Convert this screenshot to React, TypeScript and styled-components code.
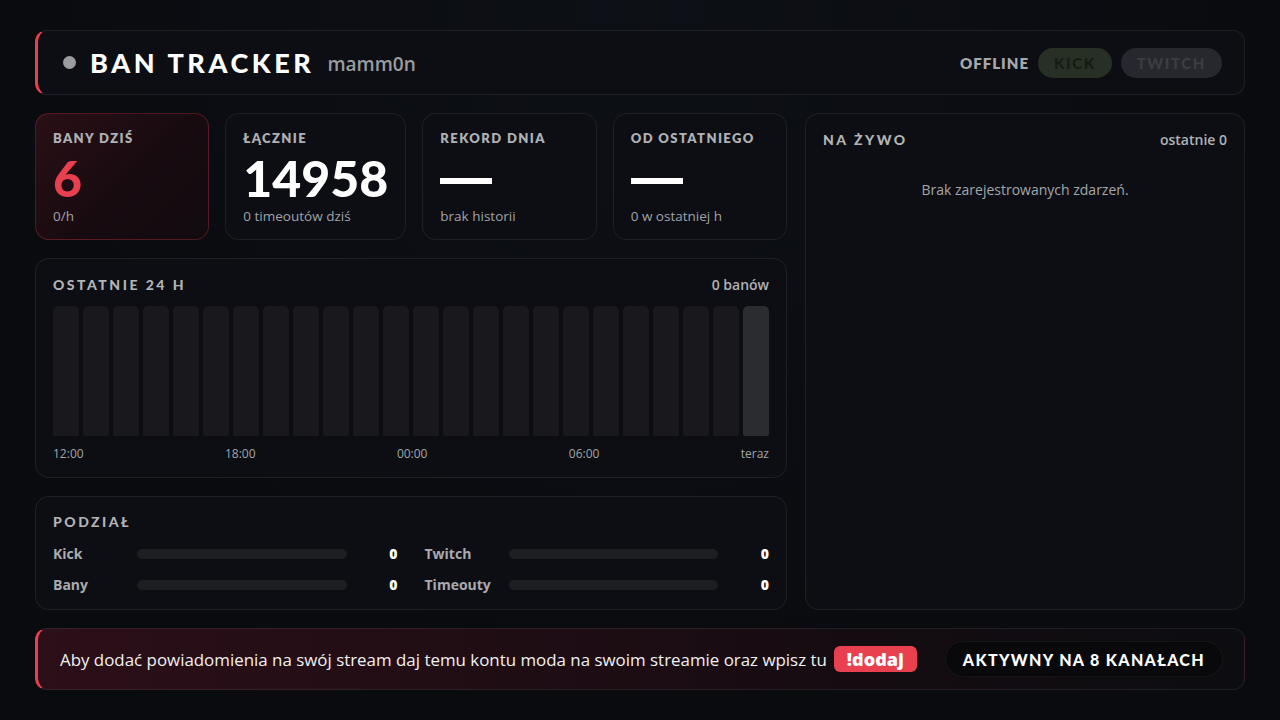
import React from "react";
import styled, { createGlobalStyle, css } from "styled-components";

const RED = "#e8404f";

const GlobalStyle = createGlobalStyle`
  html, body {
    margin: 0;
    padding: 0;
    background: #090b0f;
    color: #e6e6e6;
    font-family: "Open Sans", "Noto Sans", sans-serif;
  }
  * { box-sizing: border-box; }
`;

const Page = styled.div`
  width: 1280px;
  height: 720px;
  padding: 30px 35px 30px 35px;
  display: flex;
  flex-direction: column;
  gap: 18px;
  background: radial-gradient(ellipse at 50% 0%, #0d1016 0%, #090b0f 70%);
`;

const Panel = styled.section`
  background: #0c0e13;
  border: 1px solid rgba(255, 255, 255, 0.07);
  border-radius: 14px;
`;

const Header = styled(Panel)`
  height: 65px;
  flex-shrink: 0;
  border-left: 3px solid ${RED};
  border-radius: 12px;
  display: flex;
  align-items: center;
  justify-content: space-between;
  padding: 0 22px 0 25px;
`;

const Brand = styled.div`
  display: flex;
  align-items: center;
`;

const StatusDot = styled.span`
  width: 13px;
  height: 13px;
  border-radius: 50%;
  background: #9b9c9f;
  margin-right: 14px;
`;

const Title = styled.h1`
  margin: 0;
  font-family: "Lato", sans-serif;
  font-weight: 900;
  font-size: 27px;
  letter-spacing: 3.6px;
  color: #fff;
`;

const Channel = styled.span`
  margin-left: 13px;
  font-size: 19px;
  font-weight: 600;
  color: #9a9ca1;
  margin-top: 2px;
`;

const HeaderRight = styled.div`
  display: flex;
  align-items: center;
  gap: 9px;
`;

const Offline = styled.span`
  font-family: "Lato", sans-serif;
  font-weight: 800;
  font-size: 15px;
  letter-spacing: 1px;
  color: #a6a8ac;
`;

const Pill = styled.span<{ $tone: "kick" | "twitch" }>`
  height: 30px;
  padding: 0 16px;
  border-radius: 15px;
  display: inline-flex;
  align-items: center;
  font-family: "Lato", sans-serif;
  font-weight: 900;
  font-size: 15px;
  letter-spacing: 1.6px;
  ${({ $tone }) =>
    $tone === "kick"
      ? css`
          background: #283026;
          color: #141c13;
        `
      : css`
          background: #27272e;
          color: #3c3c45;
        `}
`;

const Main = styled.div`
  flex: 1;
  display: grid;
  grid-template-columns: 752px 1fr;
  gap: 18px;
  min-height: 0;
`;

const LeftCol = styled.div`
  display: flex;
  flex-direction: column;
  gap: 18px;
`;

const StatRow = styled.div`
  display: flex;
  gap: 16px;
  height: 127px;
`;

const StatCard = styled(Panel)<{ $accent?: boolean }>`
  flex: 1 1 0;
  padding: 16px 17px 0;
  display: flex;
  flex-direction: column;
  ${({ $accent }) =>
    $accent &&
    css`
      background: linear-gradient(135deg, #2a0f16 0%, #170b10 55%, #110b0f 100%);
      border-color: rgba(232, 64, 79, 0.28);
    `}
`;

const Label = styled.div`
  font-family: "Lato", sans-serif;
  font-weight: 800;
  font-size: 13px;
  letter-spacing: 1.4px;
  color: #aeb0b4;
  text-transform: uppercase;
`;

const StatValue = styled.div<{ $red?: boolean }>`
  font-family: "Lato", sans-serif;
  font-weight: 900;
  font-size: 50px;
  line-height: 50px;
  height: 50px;
  margin-top: 7px;
  color: ${({ $red }) => ($red ? RED : "#fff")};
  display: flex;
  align-items: center;
`;

const Dash = styled.span`
  display: block;
  width: 52px;
  height: 6px;
  background: #fff;
  margin-top: 6px;
`;

const StatSub = styled.div`
  margin-top: 4px;
  font-size: 13.5px;
  color: #a0a2a7;
`;

const ChartPanel = styled(Panel)`
  height: 220px;
  padding: 16px 17px 0;
`;

const PanelHead = styled.div`
  display: flex;
  justify-content: space-between;
  align-items: center;
`;

const HeadTitle = styled.h2`
  margin: 0;
  font-family: "Lato", sans-serif;
  font-weight: 900;
  font-size: 14px;
  letter-spacing: 2.5px;
  color: #b2b4b8;
`;

const HeadMeta = styled.span`
  font-size: 14px;
  font-weight: 600;
  color: #b0b2b6;
`;

const Bars = styled.div`
  margin-top: 12px;
  height: 130px;
  display: grid;
  grid-template-columns: repeat(24, 1fr);
  gap: 4px;
  align-items: end;
`;

const Bar = styled.div<{ $now?: boolean }>`
  height: 100%;
  border-radius: 5px 5px 2px 2px;
  background: ${({ $now }) => ($now ? "#2a2c30" : "#19191d")};
`;

const Axis = styled.div`
  margin-top: 9px;
  display: flex;
  justify-content: space-between;
  font-size: 12px;
  color: #a3a5a9;
`;

const SplitPanel = styled(Panel)`
  flex: 1;
  padding: 16px 17px 0;
`;

const SplitGrid = styled.div`
  margin-top: 14px;
  display: grid;
  grid-template-columns: 1fr 1fr;
  column-gap: 27px;
  row-gap: 12px;
`;

const SplitRow = styled.div`
  display: grid;
  grid-template-columns: 84px 1fr 51px;
  align-items: center;
  height: 19px;
`;

const SplitName = styled.span`
  font-size: 14px;
  font-weight: 700;
  color: #a9abaf;
`;

const Track = styled.div`
  height: 10px;
  border-radius: 5px;
  background: #1c1e22;
`;

const SplitValue = styled.span`
  text-align: right;
  font-size: 14px;
  font-weight: 800;
  color: #fff;
`;

const LivePanel = styled(Panel)`
  padding: 16px 17px;
`;

const Empty = styled.p`
  margin: 31px 0 0;
  text-align: center;
  font-size: 14px;
  color: #a4a6aa;
`;

const Footer = styled.footer`
  height: 62px;
  flex-shrink: 0;
  border: 1px solid rgba(255, 255, 255, 0.07);
  border-left: 3px solid ${RED};
  border-radius: 12px;
  background: linear-gradient(90deg, #2c0f18 0%, #1f0d14 40%, #140c11 70%, #0c0d11 100%);
  display: flex;
  align-items: center;
  justify-content: space-between;
  padding: 0 21px 0 22px;
`;

const Notice = styled.p`
  margin: 0;
  font-size: 16.9px;
  color: #f1f1f1;
  display: flex;
  align-items: center;
`;

const Command = styled.span`
  margin-left: 7px;
  background: ${RED};
  color: #fff;
  font-weight: 800;
  font-size: 18px;
  line-height: 26px;
  padding: 0 13px;
  border-radius: 6px;
`;

const ActiveBadge = styled.span`
  height: 36px;
  padding: 0 17px;
  border-radius: 18px;
  background: #09090c;
  border: 1px solid rgba(255, 255, 255, 0.05);
  display: inline-flex;
  align-items: center;
  font-family: "Lato", sans-serif;
  font-weight: 900;
  font-size: 16px;
  letter-spacing: 1.35px;
  color: #fff;
`;

const stats = [
  { label: "Bany dziś", value: "6", sub: "0/h", accent: true },
  { label: "Łącznie", value: "14958", sub: "0 timeoutów dziś" },
  { label: "Rekord dnia", value: null, sub: "brak historii" },
  { label: "Od ostatniego", value: null, sub: "0 w ostatniej h" },
];

const split = [
  ["Kick", "0"],
  ["Twitch", "0"],
  ["Bany", "0"],
  ["Timeouty", "0"],
];

export default function App() {
  return (
    <>
      <GlobalStyle />
      <Page>
        <Header>
          <Brand>
            <StatusDot />
            <Title>BAN TRACKER</Title>
            <Channel>mamm0n</Channel>
          </Brand>
          <HeaderRight>
            <Offline>OFFLINE</Offline>
            <Pill $tone="kick">KICK</Pill>
            <Pill $tone="twitch">TWITCH</Pill>
          </HeaderRight>
        </Header>

        <Main>
          <LeftCol>
            <StatRow>
              {stats.map((s) => (
                <StatCard key={s.label} $accent={s.accent}>
                  <Label>{s.label}</Label>
                  <StatValue $red={s.accent}>{s.value ?? <Dash />}</StatValue>
                  <StatSub>{s.sub}</StatSub>
                </StatCard>
              ))}
            </StatRow>

            <ChartPanel>
              <PanelHead>
                <HeadTitle>OSTATNIE 24 H</HeadTitle>
                <HeadMeta>0 banów</HeadMeta>
              </PanelHead>
              <Bars>
                {Array.from({ length: 24 }, (_, i) => (
                  <Bar key={i} $now={i === 23} />
                ))}
              </Bars>
              <Axis>
                <span>12:00</span>
                <span>18:00</span>
                <span>00:00</span>
                <span>06:00</span>
                <span>teraz</span>
              </Axis>
            </ChartPanel>

            <SplitPanel>
              <HeadTitle>PODZIAŁ</HeadTitle>
              <SplitGrid>
                {split.map(([name, val]) => (
                  <SplitRow key={name}>
                    <SplitName>{name}</SplitName>
                    <Track />
                    <SplitValue>{val}</SplitValue>
                  </SplitRow>
                ))}
              </SplitGrid>
            </SplitPanel>
          </LeftCol>

          <LivePanel>
            <PanelHead>
              <HeadTitle>NA ŻYWO</HeadTitle>
              <HeadMeta>ostatnie 0</HeadMeta>
            </PanelHead>
            <Empty>Brak zarejestrowanych zdarzeń.</Empty>
          </LivePanel>
        </Main>

        <Footer>
          <Notice>
            Aby dodać powiadomienia na swój stream daj temu kontu moda na swoim
            streamie oraz wpisz tu
            <Command>!dodaj</Command>
          </Notice>
          <ActiveBadge>AKTYWNY NA 8 KANAŁACH</ActiveBadge>
        </Footer>
      </Page>
    </>
  );
}
